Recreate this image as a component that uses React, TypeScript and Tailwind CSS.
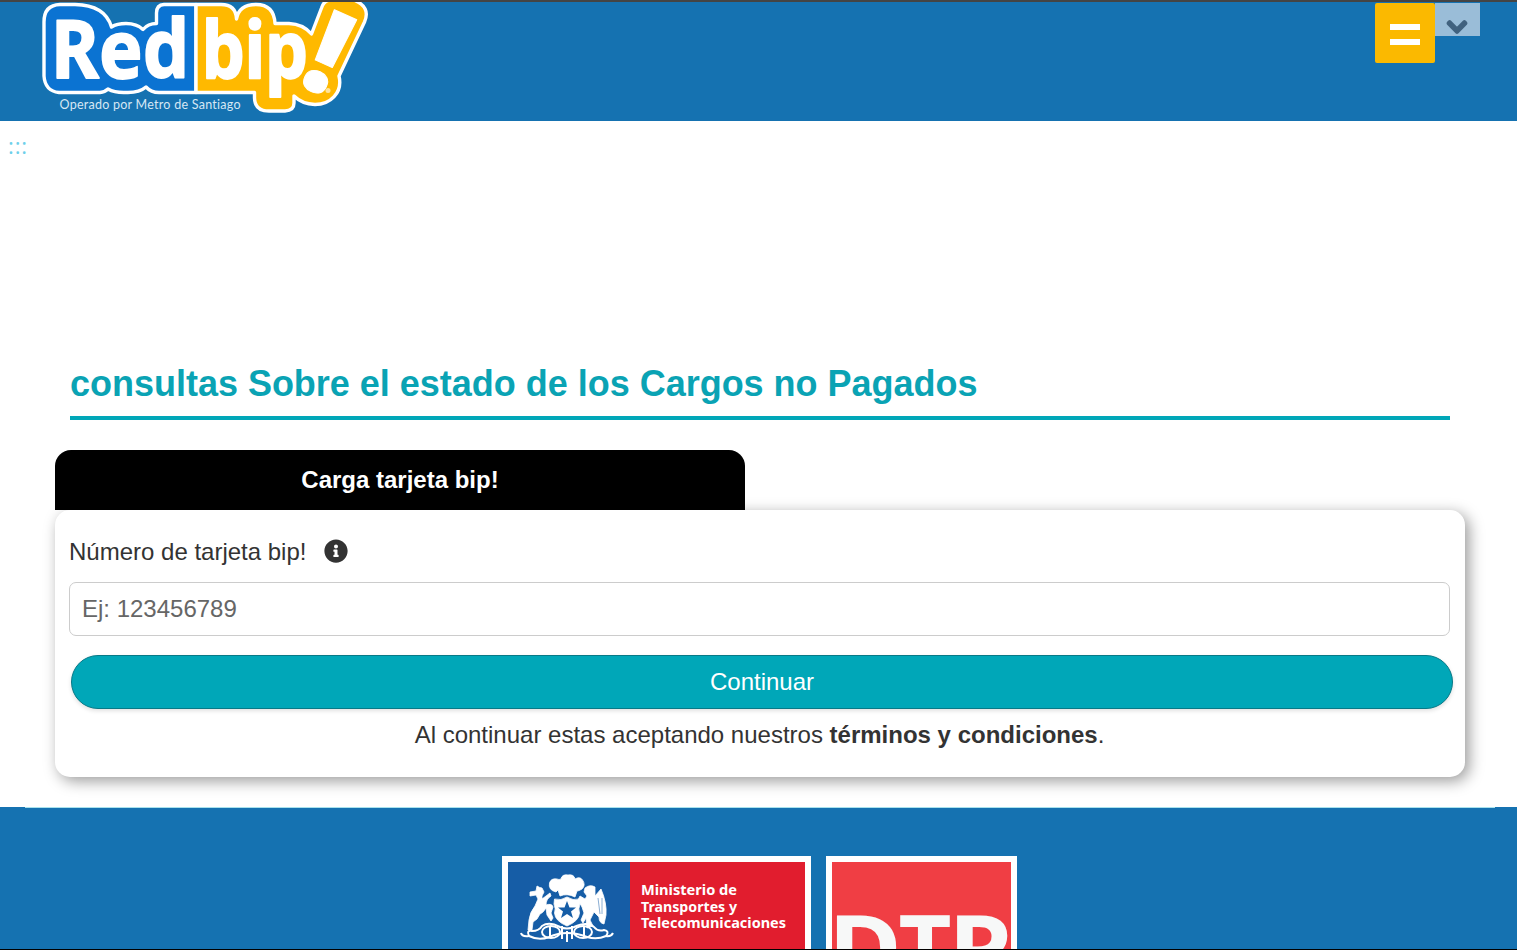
import { FaChevronDown, FaInfoCircle } from "react-icons/fa";

function BipLogo() {
  return (
    <svg viewBox="42 2 328 112" className="h-28 w-[328px] shrink-0" role="img" aria-label="Red bip!">
      <g stroke="#fff" strokeWidth="3.4" strokeLinejoin="round">
        <path
          fill="#0b73d2"
          d="M196 4.5H164Q156.500 5 156.500 13V23.500Q148 23.500 143 29.500Q137 23.500 126 23.500Q117 23.500 111.500 27Q105 5 75 4.500H60Q44 5 44 22V76Q45 91 59 92.500H100Q105 92 108 89Q115 93 126 92.500Q139 93 146 87Q151 92.500 159 92.500H196Z"
        />
        <path
          fill="#ffb900"
          d="M196 4.500H221Q236 4.500 236.500 19Q239 4.500 256 4.500Q274 4.500 275 23.500H289Q303 24 311.500 34L321.500 8Q324 0 331 0H354Q371 7 364.500 22L339 76C343 93 330 104.500 315 104.500Q302 104 294 96V103Q294 110.500 285 111H269Q255 111 254.500 98V92.500H196Z"
        />
      </g>
      <g fill="#fff" fontFamily="'Noto Sans', sans-serif" fontWeight="700" stroke="#fff" strokeLinejoin="round">
        <text x="51" y="77.500" fontSize="81" textLength="138" lengthAdjust="spacingAndGlyphs" strokeWidth="1.8">Red</text>
        <text x="202" y="77.500" fontSize="78" textLength="106" lengthAdjust="spacingAndGlyphs" strokeWidth="2">bip</text>
        <text transform="translate(311 90) rotate(24)" x="-16" y="0" fontFamily="'Open Sans', sans-serif" fontSize="116" fontWeight="800">!</text>
      </g>
      <circle cx="328" cy="90.500" r="2.500" fill="#ffe39b" />
      <text x="59.500" y="108.500" fontFamily="Lato, sans-serif" fontSize="12.500" fill="#d6e7f4" textLength="181" className="[font-variant-ligatures:none]">
        Operado por Metro de Santiago
      </text>
    </svg>
  );
}

function CoatOfArms() {
  return (
    <svg viewBox="520 872 96 72" className="ml-[11px] mt-2.5 h-[72px] w-24 shrink-0" aria-hidden="true">
      <g fill="#fff" stroke="#fff" strokeWidth="0.8" strokeLinejoin="round">
        <path d="M557 892Q549 890 550.500 883Q552 878 558 879Q560 880 562 879Q563 874 569 875Q575 874 576 879Q581 876 583.500 880Q587 885 583 889Q580 891 578 891L576 897Q568 893 561 896L559 890Z" />
        <path d="M555.500 899Q562 901 568 897Q574 901 580.500 899L581 904Q579 909 580.500 913Q580 921 568 926Q556 921 555.500 913Q557 909 555 904Z" />
        <path d="M538 886Q541 888 543 888L545 892L543 896V899Q547 896 551 893L552 896Q547 899 547 905Q553 903 554 907L552 913L554 918L552 921L548 915L547 908Q544 913 541 914L538 919L534 922L533 930H529L530 920Q531 912 536 906L539 899L537 895L531 896V892L537 891Z" />
        <path d="M586 888Q591 884 596 887L596 896L602 889Q608 903 607 915L605 924Q600 923 600 917L595 912L591 920L594 926L588 928L587 918L584 923L582 920L585 913L583 907L579 900L581 896L586 899L588 896L585 892Z" />
      </g>
      <path d="M568 901L570.500 907.500H577L572 911.500L574 918L568 914L562 918L564 911.500L559 907.500H565.500Z" fill="#165da6" />
      <path d="M599 898L601 914M603 898V914" fill="none" stroke="#165da6" strokeWidth="0.5" />
      <g fill="none" stroke="#fff" strokeWidth="2">
        <path d="M522 933Q523 937 530 936Q527 930 533 931Q540 931 543 926Q550 921 561 927Q568 930 575 927Q588 921 595 927Q599 932 605 930Q611 931 607 936Q612 937 614 933" />
        <path d="M530 936Q540 941 550 937Q568 929 588 937Q598 940 607 936" />
        <ellipse cx="552" cy="932" rx="9" ry="6" />
        <ellipse cx="584" cy="932" rx="9" ry="6" />
        <path d="M563 926V939M573 926V939M568 931V942M551 926V938M585 926V938" />
      </g>
    </svg>
  );
}

function MinistryLogo() {
  return (
    <div className="flex h-[110px] w-[309px] border-[6px] border-white bg-[#e11d2e]">
      <div className="w-[122px] shrink-0 bg-[#165da6]">
        <CoatOfArms />
      </div>
      <svg viewBox="630 862 175 88" className="h-[88px] w-[175px]" fill="#fff" fontFamily="'Noto Sans', sans-serif" fontSize="15" fontWeight="700">
        <text x="641" y="895" textLength="96" lengthAdjust="spacingAndGlyphs">Ministerio de</text>
        <text x="641" y="911.500" textLength="96" lengthAdjust="spacingAndGlyphs">Transportes y</text>
        <text x="641" y="928" textLength="145" lengthAdjust="spacingAndGlyphs">Telecomunicaciones</text>
      </svg>
    </div>
  );
}

function DtpLogo() {
  return (
    <div className="h-[140px] w-[191px] border-[6px] border-white bg-[#f03e44]">
      <svg viewBox="832 862 179 128" className="h-32 w-[179px]" fill="#f7f8f8" fontFamily="'Noto Sans', sans-serif" fontSize="92" fontWeight="700">
        <text x="828.500" y="980.700" textLength="73" lengthAdjust="spacingAndGlyphs">D</text>
        <text x="898.500" y="980.700" textLength="53" lengthAdjust="spacingAndGlyphs">T</text>
        <text x="948.500" y="980.700" textLength="63" lengthAdjust="spacingAndGlyphs">P</text>
      </svg>
    </div>
  );
}

export default function App() {
  return (
    <div className="flex h-[950px] w-[1517px] flex-col overflow-hidden border-b border-black bg-white font-['Liberation_Sans',Arial,sans-serif] text-2xl text-[#333]">
      <header className="flex h-[121px] shrink-0 justify-between border-t-2 border-[#444] bg-[#1572b1] pl-[42px] pr-[37px]">
        <BipLogo />
        <div className="flex items-start pt-px">
          <button aria-label="Menú" className="flex size-[60px] flex-col items-center justify-center gap-[9px] rounded-[2px] bg-[#fbb900] pt-0.5">
            <span className="h-1.5 w-[30px] bg-white" />
            <span className="h-1.5 w-[30px] bg-white" />
          </button>
          <button aria-label="Mostrar" className="flex h-[33px] w-[45px] items-center justify-center bg-[#9abdd8] pr-px pt-3.5 text-[#41627f]">
            <FaChevronDown size={22} stroke="currentColor" strokeWidth={50} strokeLinejoin="round" />
          </button>
        </div>
      </header>
      <div className="h-[237px] shrink-0 pl-2 pt-2 font-['Open_Sans',sans-serif] text-[22px] leading-8 tracking-[0.9px] text-[#6dcfea]">:::</div>
      <main className="ml-[55px] w-[1410px] shrink-0">
        <h1 className="mx-[15px] h-[62px] border-b-4 border-[#00a7b8] pt-1.5 text-[36px] font-bold leading-[40px] tracking-[-0.015px] text-[#0aa3b4]">
          consultas Sobre el estado de los Cargos no Pagados
        </h1>
        <div className="mt-[30px] flex h-[60px] w-[690px] items-center justify-center rounded-t-[16px] bg-black font-bold text-white">
          Carga tarjeta bip!
        </div>
        <form className="h-[267px] rounded-[15px] bg-white px-3.5 pt-6 shadow-[4px_4px_15px_rgba(0,0,0,0.4)]">
          <label htmlFor="card" className="flex h-[34px] items-center">
            <span className="pt-0.5">Número de tarjeta bip!</span>
            <FaInfoCircle size={24} className="ml-[18px]" />
          </label>
          <input
            id="card"
            placeholder="Ej: 123456789"
            className="mt-3.5 block h-[54px] w-[1381px] rounded-[7px] border border-[#ccc] bg-white px-3 placeholder:text-[#666]"
          />
          <button type="button" className="ml-0.5 mt-[19px] block h-[54px] w-[1382px] rounded-full border border-[#087987] bg-[#00a7b8] text-white shadow-[0_2px_4px_rgba(0,0,0,0.12)]">
            Continuar
          </button>
          <p className="mt-2.5 pr-px text-center leading-8">
            Al continuar estas aceptando nuestros <b>términos y condiciones</b>.
          </p>
        </form>
      </main>
      <footer className="mt-[30px] flex h-[143px] shrink-0 flex-col items-center bg-[#1572b1]">
        <div className="ml-[25px] h-px w-[1470px] shrink-0 self-start bg-[#a8e2ed]" />
        <div className="mt-12 flex gap-[15px] pl-0.5">
          <MinistryLogo />
          <DtpLogo />
        </div>
      </footer>
    </div>
  );
}
